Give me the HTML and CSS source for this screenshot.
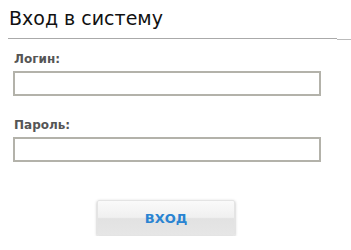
FILE: index.html
```html
<!DOCTYPE html>
<html lang="ru">

<head>
    <meta charset="UTF-8">
    <title>Вход в систему</title>
    <link rel="stylesheet" href="styles.css">
</head>

<body>
    <div class="login">
        <h1 class="title">Вход в систему</h1>
        <form class="form">
            <label class="field">
                <span class="caption">Логин:</span>
                <input class="input" type="text">
            </label>
            <label class="field">
                <span class="caption">Пароль:</span>
                <input class="input" type="password">
            </label>
            <div class="actions">
                <button class="btn" type="button">ВХОД</button>
            </div>
        </form>
    </div>
</body>

</html>
```

FILE: styles.css
```css
body {
    margin: 0;
    background: #fff;
    font-family: "DejaVu Sans", Verdana, sans-serif;
}

.login {
    padding: 6px 0 0 8px;
}

/* заголовок */

.title {
    position: relative;
    margin: 0;
    padding: 0 0 8px 1px;
    font-size: 19px;
    font-weight: normal;
    line-height: 24px;
    color: #111;
    border-bottom: 1px solid #aaa;
    width: 328px;
}

.title::after {
    position: absolute;
    content: "";
    left: 329px;
    bottom: -2px;
    width: 14px;
    height: 1px;
    background: #bbb;
}

.form {
    padding: 13px 0 0 5px;
}

/* поля */

.field {
    display: flex;
    flex-direction: column;
    margin-bottom: 22px;
}

.caption {
    font-size: 12px;
    font-weight: bold;
    line-height: 15px;
    color: #555;
    padding-left: 1px;
    margin-bottom: 4px;
}

.input {
    box-sizing: border-box;
    width: 308px;
    height: 25px;
    margin: 0;
    border: 2px solid #b3b2aa;
    background: #fff;
    outline: none;
}

/* кнопка */

.actions {
    padding: 16px 0 0 84px;
}

.btn {
    width: 138px;
    height: 36px;
    border: 1px solid #e4e4e4;
    border-radius: 2px;
    background: linear-gradient(#fafafa 0%, #f0f0f0 48%, #e2e2e2 52%, #e6e6e6 100%);
    box-shadow: 0 1px 3px rgba(0, 0, 0, 0.3);
    font-family: "DejaVu Sans", Verdana, sans-serif;
    font-size: 13px;
    font-weight: bold;
    color: #2a84d2;
    cursor: pointer;
}
```
